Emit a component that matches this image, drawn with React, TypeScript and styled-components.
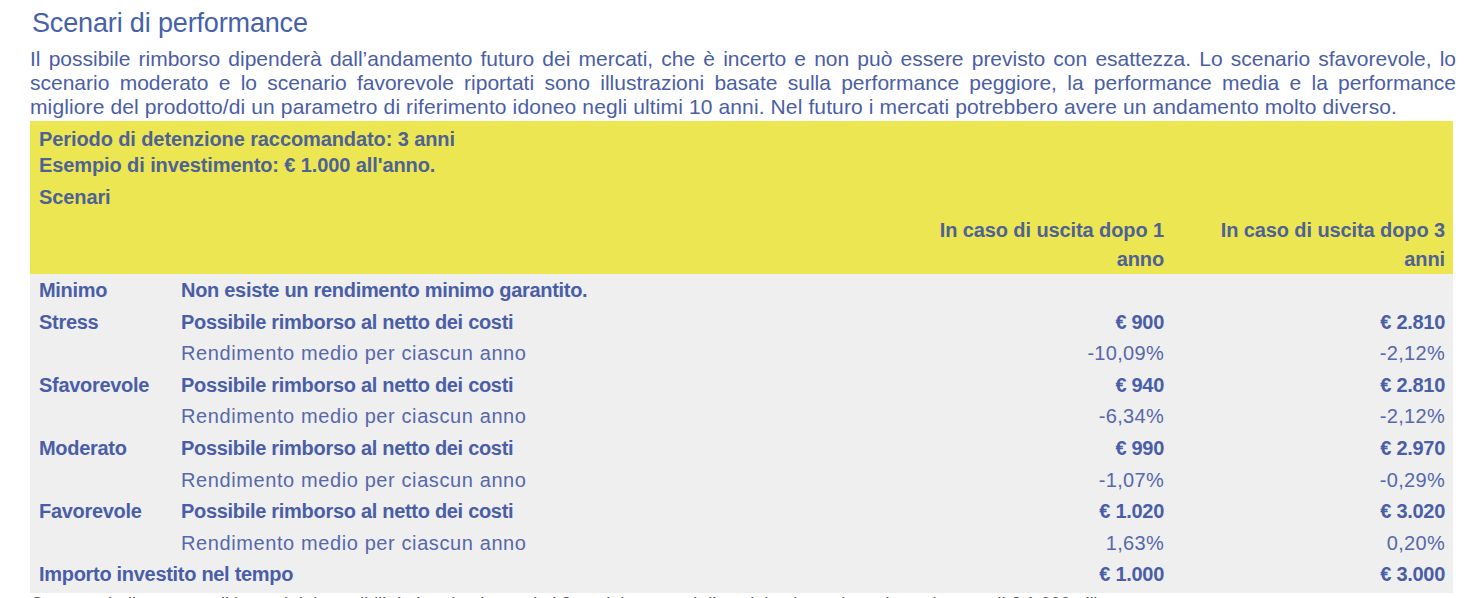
import styled, { createGlobalStyle } from 'styled-components';

const GlobalStyle = createGlobalStyle`
  html, body {
    margin: 0;
    padding: 0;
    background: #ffffff;
  }
  body {
    font-family: "Liberation Sans", Arial, sans-serif;
    overflow: hidden;
  }
`;

interface IRow {
  label?: string;
  text: string;
  first?: string;
  second?: string;
  strong: boolean;
}

const intro = [
  'Il possibile rimborso dipenderà dall’andamento futuro dei mercati, che è incerto e non può essere previsto con esattezza. Lo scenario sfavorevole, lo',
  'scenario moderato e lo scenario favorevole riportati sono illustrazioni basate sulla performance peggiore, la performance media e la performance',
  'migliore del prodotto/di un parametro di riferimento idoneo negli ultimi 10 anni. Nel futuro i mercati potrebbero avere un andamento molto diverso.',
];

const rows: IRow[] = [
  { label: 'Minimo', text: 'Non esiste un rendimento minimo garantito.', strong: true },
  { label: 'Stress', text: 'Possibile rimborso al netto dei costi', first: '€ 900', second: '€ 2.810', strong: true },
  { text: 'Rendimento medio per ciascun anno', first: '-10,09%', second: '-2,12%', strong: false },
  { label: 'Sfavorevole', text: 'Possibile rimborso al netto dei costi', first: '€ 940', second: '€ 2.810', strong: true },
  { text: 'Rendimento medio per ciascun anno', first: '-6,34%', second: '-2,12%', strong: false },
  { label: 'Moderato', text: 'Possibile rimborso al netto dei costi', first: '€ 990', second: '€ 2.970', strong: true },
  { text: 'Rendimento medio per ciascun anno', first: '-1,07%', second: '-0,29%', strong: false },
  { label: 'Favorevole', text: 'Possibile rimborso al netto dei costi', first: '€ 1.020', second: '€ 3.020', strong: true },
  { text: 'Rendimento medio per ciascun anno', first: '1,63%', second: '0,20%', strong: false },
];

const App = () => {
  return (
    <Page>
      <GlobalStyle />
      <Title>Scenari di performance</Title>
      <Intro>
        {intro.map((line, index) => (
          <IntroLine key={index} last={index === intro.length - 1}>{line}</IntroLine>
        ))}
      </Intro>

      <Table>
        <Head>
          <HeadLine>Periodo di detenzione raccomandato: 3 anni</HeadLine>
          <HeadLine>Esempio di investimento: € 1.000 all'anno.</HeadLine>
          <HeadLine tall>Scenari</HeadLine>
          <Grid>
            <span />
            <span />
            <ColHead>In caso di uscita dopo 1 anno</ColHead>
            <ColHead>In caso di uscita dopo 3 anni</ColHead>
          </Grid>
        </Head>

        <Body>
          {rows.map((row, index) => (
            <Grid key={index}>
              <Label>{row.label}</Label>
              <Cell strong={row.strong}>{row.text}</Cell>
              <Amount strong={row.strong}>{row.first}</Amount>
              <Amount strong={row.strong}>{row.second}</Amount>
            </Grid>
          ))}
          <Grid>
            <Total>Importo investito nel tempo</Total>
            <Amount strong>€ 1.000</Amount>
            <Amount strong>€ 3.000</Amount>
          </Grid>
        </Body>
      </Table>

      <Note>
        Questa tabella mostra gli importi dei possibili rimborsi nei prossimi 3 anni, in scenari diversi, ipotizzando un investimento di € 1.000 all'anno.
      </Note>
    </Page>
  );
};

const Page = styled.div`
  padding: 6px 16px 0 30px;
  color: #4a5ea8;
`;

const Title = styled.h2`
  margin: 0 0 0 2px;
  font-size: 27px;
  font-weight: 400;
  line-height: 34px;
  letter-spacing: -0.15px;
  color: #4661ab;
`;

const Intro = styled.div`
  margin: 7px 0 0;
  font-size: 21px;
  line-height: 24px;
  color: #4a5ea6;
`;

const IntroLine = styled.div<{ last: boolean }>`
  text-align: ${({ last }) => (last ? 'left' : 'justify')};
  text-align-last: ${({ last }) => (last ? 'left' : 'justify')};
  letter-spacing: ${({ last }) => (last ? '0.12px' : '0')};
  white-space: ${({ last }) => (last ? 'nowrap' : 'normal')};
`;

const Table = styled.div`
  margin-top: 2px;
  width: 1423px;
  font-size: 20px;
`;

const Head = styled.div`
  background: #ede653;
  padding-top: 5px;
  color: #4e6294;
  font-weight: 700;
  letter-spacing: -0.1px;
`;

const HeadLine = styled.div<{ tall?: boolean }>`
  padding-left: 9px;
  line-height: ${({ tall }) => (tall ? '38px' : '26px')};
`;

const Grid = styled.div`
  display: grid;
  grid-template-columns: 142px 1fr 250px 281px;
  align-items: center;
`;

const ColHead = styled.div`
  padding: 0 8px;
  text-align: right;
  line-height: 29px;
`;

const Body = styled.div`
  background: #efefef;
  padding-top: 1px;
  padding-bottom: 2px;
`;

const Label = styled.div`
  padding-left: 9px;
  line-height: 31.6px;
  font-weight: 700;
  letter-spacing: -0.3px;
  color: #4a5ea8;
`;

const Cell = styled.div<{ strong: boolean }>`
  padding-left: 9px;
  line-height: 31.6px;
  white-space: nowrap;
  font-weight: ${({ strong }) => (strong ? 700 : 400)};
  color: ${({ strong }) => (strong ? '#4a5ea8' : '#5668ac')};
  letter-spacing: ${({ strong }) => (strong ? '-0.3px' : '0.6px')};
`;

const Total = styled.div`
  grid-column: 1 / 3;
  padding-left: 9px;
  line-height: 31.6px;
  font-weight: 700;
  letter-spacing: -0.3px;
`;

const Amount = styled.div<{ strong: boolean }>`
  padding-right: 8px;
  text-align: right;
  line-height: 31.6px;
  font-weight: ${({ strong }) => (strong ? 700 : 400)};
  color: ${({ strong }) => (strong ? '#4a5ea8' : '#5668ac')};
  letter-spacing: ${({ strong }) => (strong ? '-0.3px' : '0.3px')};
`;

const Note = styled.p`
  margin: 0;
  font-size: 18px;
  line-height: 22px;
  color: #555555;
  white-space: nowrap;
`;

export default App;
